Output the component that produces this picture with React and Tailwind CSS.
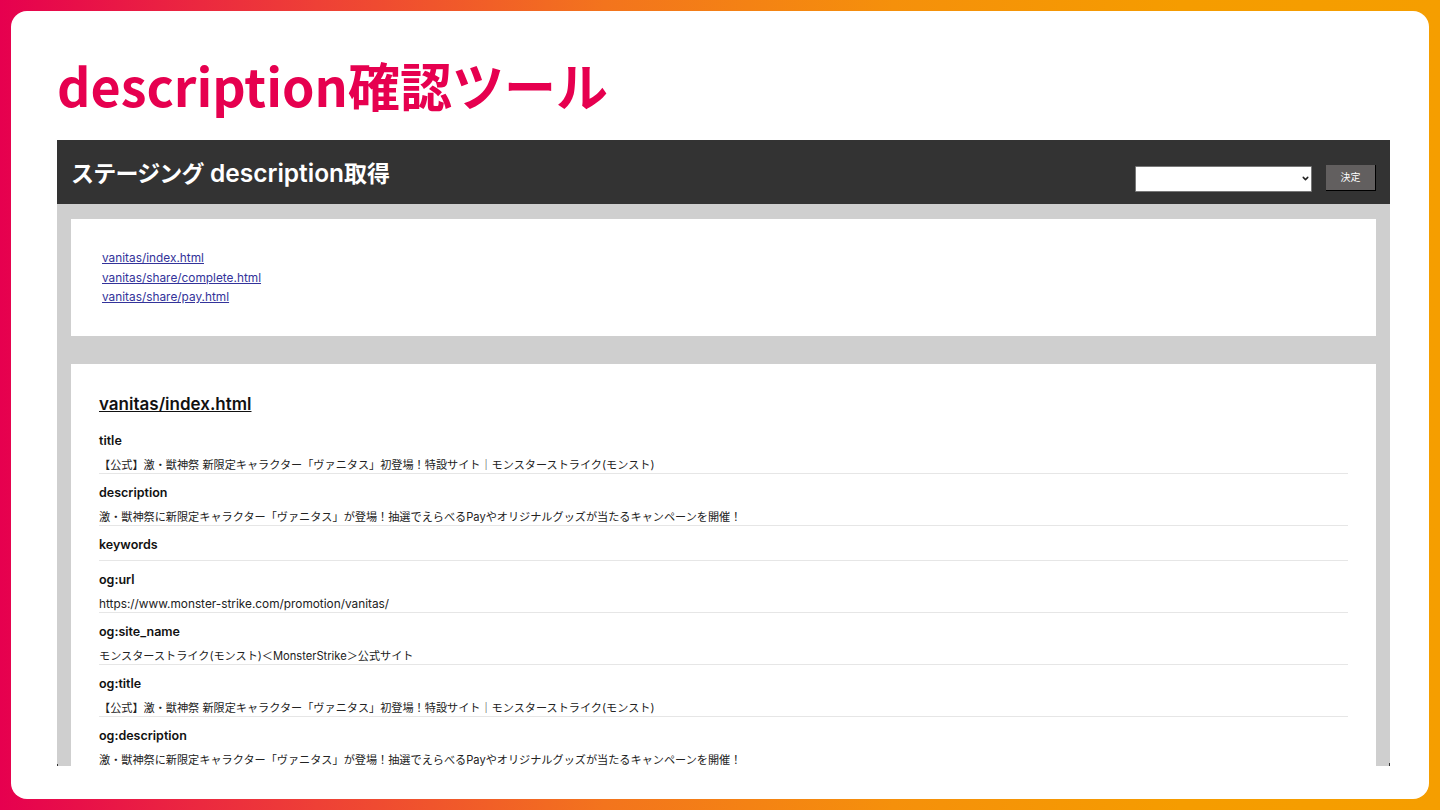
import { ChevronDown } from "lucide-react";

const rows = [
  ["title", "【公式】激・獣神祭 新限定キャラクター「ヴァニタス」初登場！特設サイト｜モンスターストライク(モンスト)"],
  ["description", "激・獣神祭に新限定キャラクター「ヴァニタス」が登場！抽選でえらべるPayやオリジナルグッズが当たるキャンペーンを開催！"],
  ["keywords", ""],
  ["og:url", "https://www.monster-strike.com/promotion/vanitas/"],
  ["og:site_name", "モンスターストライク(モンスト)＜MonsterStrike＞公式サイト"],
  ["og:title", "【公式】激・獣神祭 新限定キャラクター「ヴァニタス」初登場！特設サイト｜モンスターストライク(モンスト)"],
  ["og:description", "激・獣神祭に新限定キャラクター「ヴァニタス」が登場！抽選でえらべるPayやオリジナルグッズが当たるキャンペーンを開催！"],
];
const links = ["vanitas/index.html", "vanitas/share/complete.html", "vanitas/share/pay.html"];

export default function App() {
  return (
    <div className="w-[1440px] h-[810px] p-[11px] overflow-hidden bg-[linear-gradient(to_right,#e6004f_0%,#ee4036_22%,#f3741d_42%,#f5900b_62%,#f59c00_82%,#f59e00_100%)] font-['Inter','Noto_Sans_CJK_JP',sans-serif]">
      <div className="h-[788px] bg-white rounded-2xl pl-[46px] pr-[39px] flex flex-col">
        <h1 className="h-[129px] pt-[40px] text-[52px] leading-[68px] font-bold text-[#e6004f] font-['Noto_Sans_CJK_JP',sans-serif] whitespace-nowrap">
          description確認ツール
        </h1>
        <div className="relative h-[626px] overflow-hidden bg-[#cfcfcf] flex flex-col">
          <header className="h-[64px] shrink-0 bg-[#333333] flex items-start justify-between px-[14px]">
            <div className="pt-[17px] text-[23px] leading-[32px] font-semibold text-white whitespace-nowrap">
              <span className="tracking-[-0.8px]">ステージング</span>
              <span className="text-[24.5px]"> description</span>
              <span>取得</span>
            </div>
            <div className="flex items-center gap-[14px] pt-[25px]">
              <div className="relative w-[177px] h-[26px]">
                <select className="appearance-none w-full h-full bg-white border border-[#777777] rounded-[1px] text-[11px]" />
                <ChevronDown size={9} strokeWidth={4} className="absolute right-[2px] top-[9px] text-[#222222] pointer-events-none" />
              </div>
              <button className="w-[50px] h-[26px] bg-[#625f5f] text-white text-[10px] border-r border-b border-black">決定</button>
            </div>
          </header>
          <div className="mx-[14px] mt-[15px] h-[117px] shrink-0 bg-white pl-[31px] pt-[30px] flex flex-col">
            {links.map((l) => (
              <a key={l} href="#" className="text-[11.85px] leading-[19.6px] text-[#33339a] underline w-fit">{l}</a>
            ))}
          </div>
          <div className="mx-[14px] mt-[28px] bg-white px-[28px] pt-[27px] flex-1">
            <h2 className="text-[17px] leading-[26px] font-semibold text-[#111111] underline mb-[5px]">vanitas/index.html</h2>
            {rows.map(([k, v]) => (
              <div key={k} className={`border-b border-[#e6e6e6] flex flex-col ${v ? "h-[52px]" : "h-[35px]"}`}>
                <div className="h-[29px] pt-[9px] text-[12.5px] leading-[20px] font-semibold text-[#111111]">{k}</div>
                {v && <div className={`pt-[6px] leading-[16px] text-[#222222] whitespace-nowrap ${k === "og:url" ? "text-[11.83px]" : "text-[11.15px]"}`}>{v}</div>}
              </div>
            ))}
          </div>
          <span className="absolute left-0 bottom-0 w-px h-[2px] bg-[#333333]" />
          <span className="absolute right-0 bottom-0 w-px h-[3px] bg-[#333333]" />
        </div>
      </div>
    </div>
  );
}
